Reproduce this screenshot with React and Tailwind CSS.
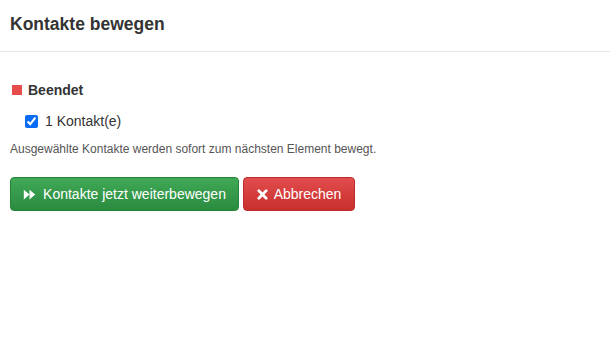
import { useState } from 'react'

const ForwardIcon = () => (
  <svg viewBox="0 0 16 12" className="w-[13px] h-[11px]" fill="currentColor">
    <path d="M1 0 L8 6 L1 12 Z" />
    <path d="M8 0 L15 6 L8 12 Z" />
  </svg>
)

const TimesIcon = () => (
  <svg viewBox="0 0 12 12" className="w-[11px] h-[11px]" fill="none" stroke="currentColor" strokeWidth="3" strokeLinecap="round">
    <path d="M2 2 L10 10 M10 2 L2 10" />
  </svg>
)

export default function App() {
  const [checked, setChecked] = useState(true)

  return (
    <div className="w-[610px] h-[355px] bg-white text-[#333] font-['Liberation_Sans',Arial,sans-serif]">
      <div className="h-[52px] flex items-center px-[10px] border-b border-[#e5e5e5]">
        <h4 className="text-[17.5px] font-semibold leading-none -mt-[2px]">Kontakte bewegen</h4>
      </div>

      <div className="px-[10px]">
        <div className="mt-[28px] flex items-center gap-[6px] h-[20px]">
          <span className="w-[10px] h-[10px] ml-[2px] bg-[#e74c4c]" />
          <span className="text-[14px] font-bold">Beendet</span>
        </div>

        <label className="mt-[11px] flex items-center h-[20px] pl-[15px] text-[14px]">
          <input
            type="checkbox"
            checked={checked}
            onChange={() => setChecked(!checked)}
            className="w-[13px] h-[13px] m-0 accent-[#0a6cf5]"
          />
          <span className="ml-[7px]">1 Kontakt(e)</span>
        </label>

        <p className="mt-[10px] text-[12px] leading-[17px] text-[#555]">
          Ausgewählte Kontakte werden sofort zum nächsten Element bewegt.
        </p>

        <div className="mt-[19px] flex gap-[4px]">
          <button className="h-[34px] w-[229px] flex items-center justify-center gap-[7px] rounded-[4px] border border-[#26843a] bg-gradient-to-b from-[#40a957] to-[#2a8b3f] text-white text-[14px]">
            <ForwardIcon />
            <span>Kontakte jetzt weiterbewegen</span>
          </button>
          <button className="h-[34px] w-[112px] flex items-center justify-center gap-[6px] rounded-[4px] border border-[#bb2b2b] bg-gradient-to-b from-[#e24c4c] to-[#c82e2e] text-white text-[14px]">
            <TimesIcon />
            <span>Abbrechen</span>
          </button>
        </div>
      </div>
    </div>
  )
}
